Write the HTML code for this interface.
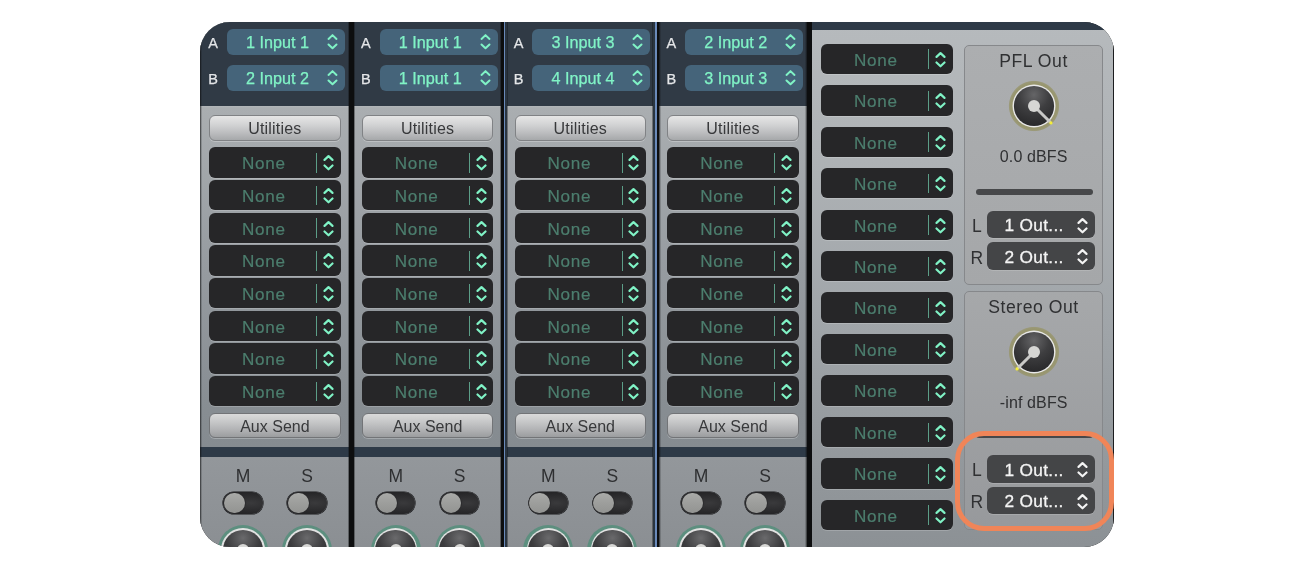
<!DOCTYPE html><html><head><meta charset="utf-8"><title>Mixer</title><style>
*{box-sizing:border-box;margin:0;padding:0}
html,body{width:1316px;height:570px;background:#fff;overflow:hidden}
body{font-family:"Liberation Sans",sans-serif;position:relative}
#app{will-change:transform;position:absolute;left:200px;top:22px;width:914px;height:524.5px;border-radius:30px;overflow:hidden;background:#0d0e0f}
.abs{position:absolute}
.strip{position:absolute;top:0;height:524.5px;background:linear-gradient(180deg,#b3b7ba 84px,#aaaeb1 86px,#979ca1 238px,#878d92 388px,#858b90 425px,#93979b 436px,#8b8f93 524px)}
.hdr{position:absolute;left:0;top:0;width:100%;height:83.8px;background:#303a45}
.strip:before,.strip:after{content:"";position:absolute;top:0;height:100%;width:1.6px;z-index:3}
.strip:before{left:0;background:linear-gradient(90deg,rgba(13,14,15,.75),rgba(13,14,15,0))}
.strip:after{right:0;background:linear-gradient(270deg,rgba(13,14,15,.75),rgba(13,14,15,0))}
.sep{position:absolute;top:0;height:524.5px;background:#18191b}
.lab{position:absolute;-webkit-text-stroke:.25px #e4e6e8;color:#e4e6e8;font-size:14.5px;line-height:16px;width:14px;text-align:center}
.bbtn{position:absolute;width:118px;height:25.7px;border-radius:6px;background:#45647a;color:#80f3c6;font-size:16.2px;}
.bbtn span{position:absolute;left:0;top:1.2px;-webkit-text-stroke:.25px #80f3c6;letter-spacing:0;width:101px;text-align:center;line-height:25.7px;white-space:nowrap}
.gbtn{position:absolute;width:131.4px;border-radius:6px;border:1px solid #808285;background:linear-gradient(180deg,#e6e6e6 0%,#d3d4d5 35%,#bcbdbf 70%,#a6a8aa 100%);color:#38393b;font-size:16px;text-align:center;white-space:nowrap;box-shadow:0 1px 0 rgba(255,255,255,.25)}
.gbtn.aux{background:linear-gradient(180deg,#dadada 0%,#c6c7c8 35%,#b0b1b3 70%,#9b9d9f 100%);border-color:#727477}
.nbox{position:absolute;width:131.6px;height:30.4px;border-radius:6px;background:#262628;color:#4c7e6e;font-size:17.1px;box-shadow:0 1px 0 rgba(255,255,255,.18)}
.nbox span{position:absolute;left:12.4px;top:1.1px;-webkit-text-stroke:.2px #4c7e6e;width:84px;text-align:center;line-height:31px;white-space:nowrap;letter-spacing:.75px;text-indent:.75px}
.nbox i{position:absolute;left:107px;top:5.8px;width:1.2px;height:19.6px;background:#5c9e88}
.nbox svg{position:absolute;left:113.8px;top:7.2px}
.band{position:absolute;left:0;width:100%;top:424.7px;height:10.7px;background:#2e3a47}
.ms{position:absolute;color:#2e2f31;font-size:17.5px;line-height:20px;width:30px;text-align:center}
.tog{position:absolute;width:39.6px;height:22.2px;border-radius:11.1px;background:radial-gradient(ellipse at 70% 50%,#3a3a3c 0%,#252527 70%,#1d1d1f 100%);box-shadow:0 0 0 .6px #1a1a1c}
.tog b{position:absolute;left:.8px;top:.8px;width:20.6px;height:20.6px;border-radius:50%;background:linear-gradient(180deg,#a9aaa8 0%,#9d9e9c 50%,#939492 100%);box-shadow:0 0 0 .7px #2a2a2c}
.bk{position:absolute;width:50px;height:50px;border-radius:50%;background:#5d8f7f}
.bk:before{content:"";position:absolute;left:3.2px;top:3.2px;width:43.6px;height:43.6px;border-radius:50%;background:#e2e2e2}
.bk:after{content:"";position:absolute;left:4.7px;top:4.7px;width:40.6px;height:40.6px;border-radius:50%;background:radial-gradient(circle at 50% 20%,#6a6a6c 0%,#3c3c3e 45%,#2a2a2c 100%)}
.bk u{position:absolute;left:19px;top:19px;width:12px;height:12px;border-radius:50%;background:#d8d8d6;z-index:2}
#rp{position:absolute;left:612px;top:0;width:302px;height:524.5px;background:linear-gradient(180deg,#b6babd 0px,#aeb2b5 140px,#a0a5a9 300px,#959a9e 420px,#8c9195 524px)}
#rp .top{position:absolute;left:0;top:0;width:100%;height:7.5px;background:#2e3a47}
.pnl{position:absolute;left:152.4px;width:138.6px;height:239.6px;border-radius:5px;border:1px solid #86888b;}
.ttl{position:absolute;left:0;width:100%;text-align:center;color:#2f3032;white-space:nowrap}
.knob{position:absolute;width:50px;height:50px}
.bar{position:absolute;height:6px;border-radius:3px;background:#47484a}
.lr{position:absolute;color:#303133;font-size:17.5px;line-height:20px;width:14px;text-align:center}
.obtn{position:absolute;width:107.6px;height:27.5px;border-radius:6px;background:#444547;color:#f4f4f4;font-size:17.3px;box-shadow:0 1px 0 rgba(255,255,255,.15)}
.obtn span{position:absolute;left:17.6px;top:1.5px;line-height:27.6px;white-space:nowrap;letter-spacing:.3px;-webkit-text-stroke:.3px #f4f4f4}
.obtn svg{position:absolute;left:90.1px;top:6px}
#hl{position:absolute;left:954.8px;top:430.6px;width:159.2px;height:100.3px;border:5.2px solid #f08558;border-radius:29px;}
#redge{position:absolute;right:0;top:0;width:1px;height:100%;background:#1c1d1f}
</style></head><body>
<div id="app">
<div class="strip" style="left:0px;width:149.3px">
<div class="hdr"></div>
<div class="lab" style="left:6.2px;top:13.4px">A</div>
<div class="bbtn" style="left:27.1px;top:7.2px"><span>1 Input 1</span><svg style="position:absolute;left:99.8px;top:4.1px" width="11" height="17" viewBox="0 0 11 17" fill="none" stroke="#80f3c6" stroke-width="2" stroke-linecap="round" stroke-linejoin="round"><path d="M1.5 5.9 L5.5 2.1 L9.5 5.9"/><path d="M1.5 11.5 L5.5 15.3 L9.5 11.5"/></svg></div>
<div class="lab" style="left:6.2px;top:49.2px">B</div>
<div class="bbtn" style="left:27.1px;top:43px"><span>2 Input 2</span><svg style="position:absolute;left:99.8px;top:4.1px" width="11" height="17" viewBox="0 0 11 17" fill="none" stroke="#80f3c6" stroke-width="2" stroke-linecap="round" stroke-linejoin="round"><path d="M1.5 5.9 L5.5 2.1 L9.5 5.9"/><path d="M1.5 11.5 L5.5 15.3 L9.5 11.5"/></svg></div>
<div class="gbtn" style="left:9.2px;top:92.8px;height:26.2px;line-height:26.2px;letter-spacing:.2px">Utilities</div>
<div class="nbox" style="left:9.2px;top:125.3px"><span>None</span><i></i><svg width="11" height="17" viewBox="0 0 11 17" fill="none" stroke="#80f3c6" stroke-width="2.15" stroke-linecap="round" stroke-linejoin="round"><path d="M1.5 5.9 L5.5 2.1 L9.5 5.9"/><path d="M1.5 11.5 L5.5 15.3 L9.5 11.5"/></svg></div>
<div class="nbox" style="left:9.2px;top:157.95px"><span>None</span><i></i><svg width="11" height="17" viewBox="0 0 11 17" fill="none" stroke="#80f3c6" stroke-width="2.15" stroke-linecap="round" stroke-linejoin="round"><path d="M1.5 5.9 L5.5 2.1 L9.5 5.9"/><path d="M1.5 11.5 L5.5 15.3 L9.5 11.5"/></svg></div>
<div class="nbox" style="left:9.2px;top:190.6px"><span>None</span><i></i><svg width="11" height="17" viewBox="0 0 11 17" fill="none" stroke="#80f3c6" stroke-width="2.15" stroke-linecap="round" stroke-linejoin="round"><path d="M1.5 5.9 L5.5 2.1 L9.5 5.9"/><path d="M1.5 11.5 L5.5 15.3 L9.5 11.5"/></svg></div>
<div class="nbox" style="left:9.2px;top:223.25px"><span>None</span><i></i><svg width="11" height="17" viewBox="0 0 11 17" fill="none" stroke="#80f3c6" stroke-width="2.15" stroke-linecap="round" stroke-linejoin="round"><path d="M1.5 5.9 L5.5 2.1 L9.5 5.9"/><path d="M1.5 11.5 L5.5 15.3 L9.5 11.5"/></svg></div>
<div class="nbox" style="left:9.2px;top:255.9px"><span>None</span><i></i><svg width="11" height="17" viewBox="0 0 11 17" fill="none" stroke="#80f3c6" stroke-width="2.15" stroke-linecap="round" stroke-linejoin="round"><path d="M1.5 5.9 L5.5 2.1 L9.5 5.9"/><path d="M1.5 11.5 L5.5 15.3 L9.5 11.5"/></svg></div>
<div class="nbox" style="left:9.2px;top:288.55px"><span>None</span><i></i><svg width="11" height="17" viewBox="0 0 11 17" fill="none" stroke="#80f3c6" stroke-width="2.15" stroke-linecap="round" stroke-linejoin="round"><path d="M1.5 5.9 L5.5 2.1 L9.5 5.9"/><path d="M1.5 11.5 L5.5 15.3 L9.5 11.5"/></svg></div>
<div class="nbox" style="left:9.2px;top:321.2px"><span>None</span><i></i><svg width="11" height="17" viewBox="0 0 11 17" fill="none" stroke="#80f3c6" stroke-width="2.15" stroke-linecap="round" stroke-linejoin="round"><path d="M1.5 5.9 L5.5 2.1 L9.5 5.9"/><path d="M1.5 11.5 L5.5 15.3 L9.5 11.5"/></svg></div>
<div class="nbox" style="left:9.2px;top:353.85px"><span>None</span><i></i><svg width="11" height="17" viewBox="0 0 11 17" fill="none" stroke="#80f3c6" stroke-width="2.15" stroke-linecap="round" stroke-linejoin="round"><path d="M1.5 5.9 L5.5 2.1 L9.5 5.9"/><path d="M1.5 11.5 L5.5 15.3 L9.5 11.5"/></svg></div>
<div class="gbtn aux" style="left:9.2px;top:391.3px;height:25.1px;line-height:25px">Aux Send</div>
<div class="band"></div>
<div class="ms" style="left:28px;top:443.9px">M</div>
<div class="tog" style="left:23.2px;top:469.9px"><b></b></div>
<div class="bk" style="left:18px;top:503px"><u></u></div>
<div class="ms" style="left:92px;top:443.9px">S</div>
<div class="tog" style="left:87.2px;top:469.9px"><b></b></div>
<div class="bk" style="left:82px;top:503px"><u></u></div>
</div>
<div class="strip" style="left:153.6px;width:147.5px">
<div class="hdr"></div>
<div class="lab" style="left:5.3px;top:13.4px">A</div>
<div class="bbtn" style="left:26.2px;top:7.2px"><span>1 Input 1</span><svg style="position:absolute;left:99.8px;top:4.1px" width="11" height="17" viewBox="0 0 11 17" fill="none" stroke="#80f3c6" stroke-width="2" stroke-linecap="round" stroke-linejoin="round"><path d="M1.5 5.9 L5.5 2.1 L9.5 5.9"/><path d="M1.5 11.5 L5.5 15.3 L9.5 11.5"/></svg></div>
<div class="lab" style="left:5.3px;top:49.2px">B</div>
<div class="bbtn" style="left:26.2px;top:43px"><span>1 Input 1</span><svg style="position:absolute;left:99.8px;top:4.1px" width="11" height="17" viewBox="0 0 11 17" fill="none" stroke="#80f3c6" stroke-width="2" stroke-linecap="round" stroke-linejoin="round"><path d="M1.5 5.9 L5.5 2.1 L9.5 5.9"/><path d="M1.5 11.5 L5.5 15.3 L9.5 11.5"/></svg></div>
<div class="gbtn" style="left:8.3px;top:92.8px;height:26.2px;line-height:26.2px;letter-spacing:.2px">Utilities</div>
<div class="nbox" style="left:8.3px;top:125.3px"><span>None</span><i></i><svg width="11" height="17" viewBox="0 0 11 17" fill="none" stroke="#80f3c6" stroke-width="2.15" stroke-linecap="round" stroke-linejoin="round"><path d="M1.5 5.9 L5.5 2.1 L9.5 5.9"/><path d="M1.5 11.5 L5.5 15.3 L9.5 11.5"/></svg></div>
<div class="nbox" style="left:8.3px;top:157.95px"><span>None</span><i></i><svg width="11" height="17" viewBox="0 0 11 17" fill="none" stroke="#80f3c6" stroke-width="2.15" stroke-linecap="round" stroke-linejoin="round"><path d="M1.5 5.9 L5.5 2.1 L9.5 5.9"/><path d="M1.5 11.5 L5.5 15.3 L9.5 11.5"/></svg></div>
<div class="nbox" style="left:8.3px;top:190.6px"><span>None</span><i></i><svg width="11" height="17" viewBox="0 0 11 17" fill="none" stroke="#80f3c6" stroke-width="2.15" stroke-linecap="round" stroke-linejoin="round"><path d="M1.5 5.9 L5.5 2.1 L9.5 5.9"/><path d="M1.5 11.5 L5.5 15.3 L9.5 11.5"/></svg></div>
<div class="nbox" style="left:8.3px;top:223.25px"><span>None</span><i></i><svg width="11" height="17" viewBox="0 0 11 17" fill="none" stroke="#80f3c6" stroke-width="2.15" stroke-linecap="round" stroke-linejoin="round"><path d="M1.5 5.9 L5.5 2.1 L9.5 5.9"/><path d="M1.5 11.5 L5.5 15.3 L9.5 11.5"/></svg></div>
<div class="nbox" style="left:8.3px;top:255.9px"><span>None</span><i></i><svg width="11" height="17" viewBox="0 0 11 17" fill="none" stroke="#80f3c6" stroke-width="2.15" stroke-linecap="round" stroke-linejoin="round"><path d="M1.5 5.9 L5.5 2.1 L9.5 5.9"/><path d="M1.5 11.5 L5.5 15.3 L9.5 11.5"/></svg></div>
<div class="nbox" style="left:8.3px;top:288.55px"><span>None</span><i></i><svg width="11" height="17" viewBox="0 0 11 17" fill="none" stroke="#80f3c6" stroke-width="2.15" stroke-linecap="round" stroke-linejoin="round"><path d="M1.5 5.9 L5.5 2.1 L9.5 5.9"/><path d="M1.5 11.5 L5.5 15.3 L9.5 11.5"/></svg></div>
<div class="nbox" style="left:8.3px;top:321.2px"><span>None</span><i></i><svg width="11" height="17" viewBox="0 0 11 17" fill="none" stroke="#80f3c6" stroke-width="2.15" stroke-linecap="round" stroke-linejoin="round"><path d="M1.5 5.9 L5.5 2.1 L9.5 5.9"/><path d="M1.5 11.5 L5.5 15.3 L9.5 11.5"/></svg></div>
<div class="nbox" style="left:8.3px;top:353.85px"><span>None</span><i></i><svg width="11" height="17" viewBox="0 0 11 17" fill="none" stroke="#80f3c6" stroke-width="2.15" stroke-linecap="round" stroke-linejoin="round"><path d="M1.5 5.9 L5.5 2.1 L9.5 5.9"/><path d="M1.5 11.5 L5.5 15.3 L9.5 11.5"/></svg></div>
<div class="gbtn aux" style="left:8.3px;top:391.3px;height:25.1px;line-height:25px">Aux Send</div>
<div class="band"></div>
<div class="ms" style="left:27.1px;top:443.9px">M</div>
<div class="tog" style="left:22.3px;top:469.9px"><b></b></div>
<div class="bk" style="left:17.1px;top:503px"><u></u></div>
<div class="ms" style="left:91.1px;top:443.9px">S</div>
<div class="tog" style="left:86.3px;top:469.9px"><b></b></div>
<div class="bk" style="left:81.1px;top:503px"><u></u></div>
</div>
<div class="strip" style="left:306.9px;width:146.5px">
<div class="hdr"></div>
<div class="lab" style="left:4.7px;top:13.4px">A</div>
<div class="bbtn" style="left:25.6px;top:7.2px"><span>3 Input 3</span><svg style="position:absolute;left:99.8px;top:4.1px" width="11" height="17" viewBox="0 0 11 17" fill="none" stroke="#80f3c6" stroke-width="2" stroke-linecap="round" stroke-linejoin="round"><path d="M1.5 5.9 L5.5 2.1 L9.5 5.9"/><path d="M1.5 11.5 L5.5 15.3 L9.5 11.5"/></svg></div>
<div class="lab" style="left:4.7px;top:49.2px">B</div>
<div class="bbtn" style="left:25.6px;top:43px"><span>4 Input 4</span><svg style="position:absolute;left:99.8px;top:4.1px" width="11" height="17" viewBox="0 0 11 17" fill="none" stroke="#80f3c6" stroke-width="2" stroke-linecap="round" stroke-linejoin="round"><path d="M1.5 5.9 L5.5 2.1 L9.5 5.9"/><path d="M1.5 11.5 L5.5 15.3 L9.5 11.5"/></svg></div>
<div class="gbtn" style="left:7.7px;top:92.8px;height:26.2px;line-height:26.2px;letter-spacing:.2px">Utilities</div>
<div class="nbox" style="left:7.7px;top:125.3px"><span>None</span><i></i><svg width="11" height="17" viewBox="0 0 11 17" fill="none" stroke="#80f3c6" stroke-width="2.15" stroke-linecap="round" stroke-linejoin="round"><path d="M1.5 5.9 L5.5 2.1 L9.5 5.9"/><path d="M1.5 11.5 L5.5 15.3 L9.5 11.5"/></svg></div>
<div class="nbox" style="left:7.7px;top:157.95px"><span>None</span><i></i><svg width="11" height="17" viewBox="0 0 11 17" fill="none" stroke="#80f3c6" stroke-width="2.15" stroke-linecap="round" stroke-linejoin="round"><path d="M1.5 5.9 L5.5 2.1 L9.5 5.9"/><path d="M1.5 11.5 L5.5 15.3 L9.5 11.5"/></svg></div>
<div class="nbox" style="left:7.7px;top:190.6px"><span>None</span><i></i><svg width="11" height="17" viewBox="0 0 11 17" fill="none" stroke="#80f3c6" stroke-width="2.15" stroke-linecap="round" stroke-linejoin="round"><path d="M1.5 5.9 L5.5 2.1 L9.5 5.9"/><path d="M1.5 11.5 L5.5 15.3 L9.5 11.5"/></svg></div>
<div class="nbox" style="left:7.7px;top:223.25px"><span>None</span><i></i><svg width="11" height="17" viewBox="0 0 11 17" fill="none" stroke="#80f3c6" stroke-width="2.15" stroke-linecap="round" stroke-linejoin="round"><path d="M1.5 5.9 L5.5 2.1 L9.5 5.9"/><path d="M1.5 11.5 L5.5 15.3 L9.5 11.5"/></svg></div>
<div class="nbox" style="left:7.7px;top:255.9px"><span>None</span><i></i><svg width="11" height="17" viewBox="0 0 11 17" fill="none" stroke="#80f3c6" stroke-width="2.15" stroke-linecap="round" stroke-linejoin="round"><path d="M1.5 5.9 L5.5 2.1 L9.5 5.9"/><path d="M1.5 11.5 L5.5 15.3 L9.5 11.5"/></svg></div>
<div class="nbox" style="left:7.7px;top:288.55px"><span>None</span><i></i><svg width="11" height="17" viewBox="0 0 11 17" fill="none" stroke="#80f3c6" stroke-width="2.15" stroke-linecap="round" stroke-linejoin="round"><path d="M1.5 5.9 L5.5 2.1 L9.5 5.9"/><path d="M1.5 11.5 L5.5 15.3 L9.5 11.5"/></svg></div>
<div class="nbox" style="left:7.7px;top:321.2px"><span>None</span><i></i><svg width="11" height="17" viewBox="0 0 11 17" fill="none" stroke="#80f3c6" stroke-width="2.15" stroke-linecap="round" stroke-linejoin="round"><path d="M1.5 5.9 L5.5 2.1 L9.5 5.9"/><path d="M1.5 11.5 L5.5 15.3 L9.5 11.5"/></svg></div>
<div class="nbox" style="left:7.7px;top:353.85px"><span>None</span><i></i><svg width="11" height="17" viewBox="0 0 11 17" fill="none" stroke="#80f3c6" stroke-width="2.15" stroke-linecap="round" stroke-linejoin="round"><path d="M1.5 5.9 L5.5 2.1 L9.5 5.9"/><path d="M1.5 11.5 L5.5 15.3 L9.5 11.5"/></svg></div>
<div class="gbtn aux" style="left:7.7px;top:391.3px;height:25.1px;line-height:25px">Aux Send</div>
<div class="band"></div>
<div class="ms" style="left:26.5px;top:443.9px">M</div>
<div class="tog" style="left:21.7px;top:469.9px"><b></b></div>
<div class="bk" style="left:16.5px;top:503px"><u></u></div>
<div class="ms" style="left:90.5px;top:443.9px">S</div>
<div class="tog" style="left:85.7px;top:469.9px"><b></b></div>
<div class="bk" style="left:80.5px;top:503px"><u></u></div>
</div>
<div class="strip" style="left:459px;width:148px">
<div class="hdr"></div>
<div class="lab" style="left:5.3px;top:13.4px">A</div>
<div class="bbtn" style="left:26.2px;top:7.2px"><span>2 Input 2</span><svg style="position:absolute;left:99.8px;top:4.1px" width="11" height="17" viewBox="0 0 11 17" fill="none" stroke="#80f3c6" stroke-width="2" stroke-linecap="round" stroke-linejoin="round"><path d="M1.5 5.9 L5.5 2.1 L9.5 5.9"/><path d="M1.5 11.5 L5.5 15.3 L9.5 11.5"/></svg></div>
<div class="lab" style="left:5.3px;top:49.2px">B</div>
<div class="bbtn" style="left:26.2px;top:43px"><span>3 Input 3</span><svg style="position:absolute;left:99.8px;top:4.1px" width="11" height="17" viewBox="0 0 11 17" fill="none" stroke="#80f3c6" stroke-width="2" stroke-linecap="round" stroke-linejoin="round"><path d="M1.5 5.9 L5.5 2.1 L9.5 5.9"/><path d="M1.5 11.5 L5.5 15.3 L9.5 11.5"/></svg></div>
<div class="gbtn" style="left:8.3px;top:92.8px;height:26.2px;line-height:26.2px;letter-spacing:.2px">Utilities</div>
<div class="nbox" style="left:8.3px;top:125.3px"><span>None</span><i></i><svg width="11" height="17" viewBox="0 0 11 17" fill="none" stroke="#80f3c6" stroke-width="2.15" stroke-linecap="round" stroke-linejoin="round"><path d="M1.5 5.9 L5.5 2.1 L9.5 5.9"/><path d="M1.5 11.5 L5.5 15.3 L9.5 11.5"/></svg></div>
<div class="nbox" style="left:8.3px;top:157.95px"><span>None</span><i></i><svg width="11" height="17" viewBox="0 0 11 17" fill="none" stroke="#80f3c6" stroke-width="2.15" stroke-linecap="round" stroke-linejoin="round"><path d="M1.5 5.9 L5.5 2.1 L9.5 5.9"/><path d="M1.5 11.5 L5.5 15.3 L9.5 11.5"/></svg></div>
<div class="nbox" style="left:8.3px;top:190.6px"><span>None</span><i></i><svg width="11" height="17" viewBox="0 0 11 17" fill="none" stroke="#80f3c6" stroke-width="2.15" stroke-linecap="round" stroke-linejoin="round"><path d="M1.5 5.9 L5.5 2.1 L9.5 5.9"/><path d="M1.5 11.5 L5.5 15.3 L9.5 11.5"/></svg></div>
<div class="nbox" style="left:8.3px;top:223.25px"><span>None</span><i></i><svg width="11" height="17" viewBox="0 0 11 17" fill="none" stroke="#80f3c6" stroke-width="2.15" stroke-linecap="round" stroke-linejoin="round"><path d="M1.5 5.9 L5.5 2.1 L9.5 5.9"/><path d="M1.5 11.5 L5.5 15.3 L9.5 11.5"/></svg></div>
<div class="nbox" style="left:8.3px;top:255.9px"><span>None</span><i></i><svg width="11" height="17" viewBox="0 0 11 17" fill="none" stroke="#80f3c6" stroke-width="2.15" stroke-linecap="round" stroke-linejoin="round"><path d="M1.5 5.9 L5.5 2.1 L9.5 5.9"/><path d="M1.5 11.5 L5.5 15.3 L9.5 11.5"/></svg></div>
<div class="nbox" style="left:8.3px;top:288.55px"><span>None</span><i></i><svg width="11" height="17" viewBox="0 0 11 17" fill="none" stroke="#80f3c6" stroke-width="2.15" stroke-linecap="round" stroke-linejoin="round"><path d="M1.5 5.9 L5.5 2.1 L9.5 5.9"/><path d="M1.5 11.5 L5.5 15.3 L9.5 11.5"/></svg></div>
<div class="nbox" style="left:8.3px;top:321.2px"><span>None</span><i></i><svg width="11" height="17" viewBox="0 0 11 17" fill="none" stroke="#80f3c6" stroke-width="2.15" stroke-linecap="round" stroke-linejoin="round"><path d="M1.5 5.9 L5.5 2.1 L9.5 5.9"/><path d="M1.5 11.5 L5.5 15.3 L9.5 11.5"/></svg></div>
<div class="nbox" style="left:8.3px;top:353.85px"><span>None</span><i></i><svg width="11" height="17" viewBox="0 0 11 17" fill="none" stroke="#80f3c6" stroke-width="2.15" stroke-linecap="round" stroke-linejoin="round"><path d="M1.5 5.9 L5.5 2.1 L9.5 5.9"/><path d="M1.5 11.5 L5.5 15.3 L9.5 11.5"/></svg></div>
<div class="gbtn aux" style="left:8.3px;top:391.3px;height:25.1px;line-height:25px">Aux Send</div>
<div class="band"></div>
<div class="ms" style="left:27.1px;top:443.9px">M</div>
<div class="tog" style="left:22.3px;top:469.9px"><b></b></div>
<div class="bk" style="left:17.1px;top:503px"><u></u></div>
<div class="ms" style="left:91.1px;top:443.9px">S</div>
<div class="tog" style="left:86.3px;top:469.9px"><b></b></div>
<div class="bk" style="left:81.1px;top:503px"><u></u></div>
</div>
<div class="abs" style="left:303.8px;top:0;width:1.4px;height:524.5px;background:#6a8aba"></div>
<div class="abs" style="left:305.3px;top:0;width:1.6px;height:524.5px;background:#2a3540"></div>
<div class="abs" style="left:454.8px;top:0;width:1.8px;height:524.5px;background:#6a8aba"></div>
<div class="abs" style="left:453.4px;top:0;width:1.2px;height:524.5px;background:#2a3540"></div>
<div id="rp"><div class="top"></div>
<div class="nbox" style="left:9.1px;top:21.7px"><span>None</span><i></i><svg width="11" height="17" viewBox="0 0 11 17" fill="none" stroke="#80f3c6" stroke-width="2.15" stroke-linecap="round" stroke-linejoin="round"><path d="M1.5 5.9 L5.5 2.1 L9.5 5.9"/><path d="M1.5 11.5 L5.5 15.3 L9.5 11.5"/></svg></div>
<div class="nbox" style="left:9.1px;top:63.15px"><span>None</span><i></i><svg width="11" height="17" viewBox="0 0 11 17" fill="none" stroke="#80f3c6" stroke-width="2.15" stroke-linecap="round" stroke-linejoin="round"><path d="M1.5 5.9 L5.5 2.1 L9.5 5.9"/><path d="M1.5 11.5 L5.5 15.3 L9.5 11.5"/></svg></div>
<div class="nbox" style="left:9.1px;top:104.6px"><span>None</span><i></i><svg width="11" height="17" viewBox="0 0 11 17" fill="none" stroke="#80f3c6" stroke-width="2.15" stroke-linecap="round" stroke-linejoin="round"><path d="M1.5 5.9 L5.5 2.1 L9.5 5.9"/><path d="M1.5 11.5 L5.5 15.3 L9.5 11.5"/></svg></div>
<div class="nbox" style="left:9.1px;top:146.05px"><span>None</span><i></i><svg width="11" height="17" viewBox="0 0 11 17" fill="none" stroke="#80f3c6" stroke-width="2.15" stroke-linecap="round" stroke-linejoin="round"><path d="M1.5 5.9 L5.5 2.1 L9.5 5.9"/><path d="M1.5 11.5 L5.5 15.3 L9.5 11.5"/></svg></div>
<div class="nbox" style="left:9.1px;top:187.5px"><span>None</span><i></i><svg width="11" height="17" viewBox="0 0 11 17" fill="none" stroke="#80f3c6" stroke-width="2.15" stroke-linecap="round" stroke-linejoin="round"><path d="M1.5 5.9 L5.5 2.1 L9.5 5.9"/><path d="M1.5 11.5 L5.5 15.3 L9.5 11.5"/></svg></div>
<div class="nbox" style="left:9.1px;top:228.95px"><span>None</span><i></i><svg width="11" height="17" viewBox="0 0 11 17" fill="none" stroke="#80f3c6" stroke-width="2.15" stroke-linecap="round" stroke-linejoin="round"><path d="M1.5 5.9 L5.5 2.1 L9.5 5.9"/><path d="M1.5 11.5 L5.5 15.3 L9.5 11.5"/></svg></div>
<div class="nbox" style="left:9.1px;top:270.4px"><span>None</span><i></i><svg width="11" height="17" viewBox="0 0 11 17" fill="none" stroke="#80f3c6" stroke-width="2.15" stroke-linecap="round" stroke-linejoin="round"><path d="M1.5 5.9 L5.5 2.1 L9.5 5.9"/><path d="M1.5 11.5 L5.5 15.3 L9.5 11.5"/></svg></div>
<div class="nbox" style="left:9.1px;top:311.85px"><span>None</span><i></i><svg width="11" height="17" viewBox="0 0 11 17" fill="none" stroke="#80f3c6" stroke-width="2.15" stroke-linecap="round" stroke-linejoin="round"><path d="M1.5 5.9 L5.5 2.1 L9.5 5.9"/><path d="M1.5 11.5 L5.5 15.3 L9.5 11.5"/></svg></div>
<div class="nbox" style="left:9.1px;top:353.3px"><span>None</span><i></i><svg width="11" height="17" viewBox="0 0 11 17" fill="none" stroke="#80f3c6" stroke-width="2.15" stroke-linecap="round" stroke-linejoin="round"><path d="M1.5 5.9 L5.5 2.1 L9.5 5.9"/><path d="M1.5 11.5 L5.5 15.3 L9.5 11.5"/></svg></div>
<div class="nbox" style="left:9.1px;top:394.75px"><span>None</span><i></i><svg width="11" height="17" viewBox="0 0 11 17" fill="none" stroke="#80f3c6" stroke-width="2.15" stroke-linecap="round" stroke-linejoin="round"><path d="M1.5 5.9 L5.5 2.1 L9.5 5.9"/><path d="M1.5 11.5 L5.5 15.3 L9.5 11.5"/></svg></div>
<div class="nbox" style="left:9.1px;top:436.2px"><span>None</span><i></i><svg width="11" height="17" viewBox="0 0 11 17" fill="none" stroke="#80f3c6" stroke-width="2.15" stroke-linecap="round" stroke-linejoin="round"><path d="M1.5 5.9 L5.5 2.1 L9.5 5.9"/><path d="M1.5 11.5 L5.5 15.3 L9.5 11.5"/></svg></div>
<div class="nbox" style="left:9.1px;top:477.65px"><span>None</span><i></i><svg width="11" height="17" viewBox="0 0 11 17" fill="none" stroke="#80f3c6" stroke-width="2.15" stroke-linecap="round" stroke-linejoin="round"><path d="M1.5 5.9 L5.5 2.1 L9.5 5.9"/><path d="M1.5 11.5 L5.5 15.3 L9.5 11.5"/></svg></div>
<div class="pnl" style="top:23.1px;background:linear-gradient(180deg,#acaeb0,#a5a7a9)">
<div class="ttl" style="top:4.2px;font-size:17.6px;line-height:22px;letter-spacing:.55px;text-indent:-.4px">PFL Out</div>
<svg class="knob" style="left:43.8px;top:35px;overflow:visible" width="50" height="50" viewBox="0 0 50 50"><defs><radialGradient id="kg45" cx="50%" cy="22%" r="75%"><stop offset="0" stop-color="#656567"/><stop offset=".5" stop-color="#3e3e40"/><stop offset="1" stop-color="#2a2a2c"/></radialGradient><radialGradient id="og45" cx="50%" cy="50%" r="50%"><stop offset=".9" stop-color="#98966f"/><stop offset=".96" stop-color="#98966f" stop-opacity=".85"/><stop offset="1" stop-color="#98966f" stop-opacity="0"/></radialGradient></defs><circle cx="25" cy="25" r="25.6" fill="url(#og45)"/><circle cx="25" cy="25" r="21.5" fill="#e8e8e8"/><circle cx="25" cy="25" r="20.1" fill="url(#kg45)"/><line x1="25" y1="25" x2="40.56" y2="40.56" stroke="#c9c9c7" stroke-width="3" stroke-linecap="round"/><circle cx="25" cy="25" r="6" fill="#d6d6d4"/><circle cx="41.97" cy="41.97" r="1.6" fill="#f4ee3a"/></svg>
<div class="ttl" style="top:101.3px;font-size:16px;line-height:20px;letter-spacing:.12px">0.0 dBFS</div>
<div class="bar" style="left:10.3px;top:142.8px;width:117.2px"></div>
<div class="lr" style="left:4.5px;top:170.1px">L</div>
<div class="obtn" style="left:21.6px;top:164.9px"><span>1 Out...</span><svg width="11" height="17" viewBox="0 0 11 17" fill="none" stroke="#f4f4f4" stroke-width="2.15" stroke-linecap="round" stroke-linejoin="round"><path d="M1.5 5.9 L5.5 2.1 L9.5 5.9"/><path d="M1.5 11.5 L5.5 15.3 L9.5 11.5"/></svg></div>
<div class="lr" style="left:4.5px;top:201.5px">R</div>
<div class="obtn" style="left:21.6px;top:196.3px"><span>2 Out...</span><svg width="11" height="17" viewBox="0 0 11 17" fill="none" stroke="#f4f4f4" stroke-width="2.15" stroke-linecap="round" stroke-linejoin="round"><path d="M1.5 5.9 L5.5 2.1 L9.5 5.9"/><path d="M1.5 11.5 L5.5 15.3 L9.5 11.5"/></svg></div>
</div>
<div class="pnl" style="top:268.7px;background:linear-gradient(180deg,#a6a8aa,#97999c)">
<div class="ttl" style="top:4.2px;font-size:17.6px;line-height:22px;letter-spacing:.55px;text-indent:-.4px">Stereo Out</div>
<svg class="knob" style="left:43.8px;top:35px;overflow:visible" width="50" height="50" viewBox="0 0 50 50"><defs><radialGradient id="kg135" cx="50%" cy="22%" r="75%"><stop offset="0" stop-color="#656567"/><stop offset=".5" stop-color="#3e3e40"/><stop offset="1" stop-color="#2a2a2c"/></radialGradient><radialGradient id="og135" cx="50%" cy="50%" r="50%"><stop offset=".9" stop-color="#98966f"/><stop offset=".96" stop-color="#98966f" stop-opacity=".85"/><stop offset="1" stop-color="#98966f" stop-opacity="0"/></radialGradient></defs><circle cx="25" cy="25" r="25.6" fill="url(#og135)"/><circle cx="25" cy="25" r="21.5" fill="#e8e8e8"/><circle cx="25" cy="25" r="20.1" fill="url(#kg135)"/><line x1="25" y1="25" x2="9.44" y2="40.56" stroke="#c9c9c7" stroke-width="3" stroke-linecap="round"/><circle cx="25" cy="25" r="6" fill="#d6d6d4"/><circle cx="8.03" cy="41.97" r="1.6" fill="#f4ee3a"/></svg>
<div class="ttl" style="top:101.3px;font-size:16px;line-height:20px;letter-spacing:.12px">-inf dBFS</div>
<div class="bar" style="left:10.3px;top:140.2px;width:117.2px;height:6.4px"></div>
<div class="lr" style="left:4.5px;top:168.6px">L</div>
<div class="obtn" style="left:21.6px;top:163.4px"><span>1 Out...</span><svg width="11" height="17" viewBox="0 0 11 17" fill="none" stroke="#f4f4f4" stroke-width="2.15" stroke-linecap="round" stroke-linejoin="round"><path d="M1.5 5.9 L5.5 2.1 L9.5 5.9"/><path d="M1.5 11.5 L5.5 15.3 L9.5 11.5"/></svg></div>
<div class="lr" style="left:4.5px;top:200.4px">R</div>
<div class="obtn" style="left:21.6px;top:195.2px"><span>2 Out...</span><svg width="11" height="17" viewBox="0 0 11 17" fill="none" stroke="#f4f4f4" stroke-width="2.15" stroke-linecap="round" stroke-linejoin="round"><path d="M1.5 5.9 L5.5 2.1 L9.5 5.9"/><path d="M1.5 11.5 L5.5 15.3 L9.5 11.5"/></svg></div>
</div>
</div>
<div id="redge"></div>
</div>
<div id="hl"></div>
</body></html>
